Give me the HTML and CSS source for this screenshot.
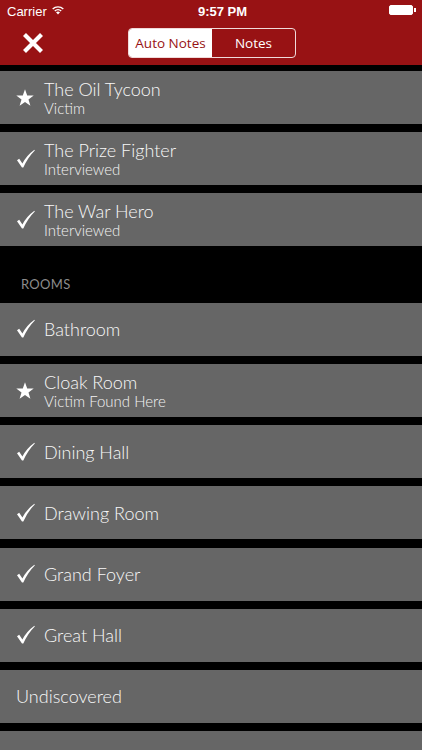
FILE: index.html
```html
<!DOCTYPE html>
<html>
<head>
<meta charset="utf-8">
<link rel="stylesheet" href="styles.css">
</head>
<body>
<div class="header">
  <div class="status">
    <div class="carrier">Carrier
      <svg class="wifi" width="14" height="10" viewBox="0 0 14 10"><path d="M7 9.5 L5 7.3 A3 3 0 0 1 9 7.3 Z" fill="#fff"/><path d="M3.3 5.6 A5.3 5.3 0 0 1 10.7 5.6 L9.7 6.6 A3.9 3.9 0 0 0 4.3 6.6 Z" fill="#fff"/><path d="M1.2 3.6 A8.2 8.2 0 0 1 12.8 3.6 L11.8 4.6 A6.8 6.8 0 0 0 2.2 4.6 Z" fill="#fff"/></svg>
    </div>
    <div class="time">9:57 PM</div>
    <div class="battery"><span class="batt-body"></span><span class="batt-tip"></span></div>
  </div>
  <div class="nav">
    <svg class="close" width="22" height="22" viewBox="0 0 22 22"><path d="M2.5 2.5 L19.5 19.5 M19.5 2.5 L2.5 19.5" stroke="#fff" stroke-width="4.2" stroke-linecap="butt"/></svg>
    <div class="seg">
      <div class="seg-item active">Auto Notes</div>
      <div class="seg-item">Notes</div>
    </div>
  </div>
</div>
<div class="list">
  <div class="row"><svg class="icon" viewBox="0 0 20 20"><path d="M10 1.2 L12.2 7.4 L18.7 7.5 L13.5 11.4 L15.4 17.7 L10 13.9 L4.6 17.7 L6.5 11.4 L1.3 7.5 L7.8 7.4 Z" fill="#fff"/></svg><div class="txt"><div class="title">The Oil Tycoon</div><div class="sub">Victim</div></div></div>
  <div class="row"><svg class="icon" viewBox="0 0 20 20"><path d="M2 11.2 L4.2 9.8 L7.4 14.6 Q11.5 6.5 19.4 0.8 L19.8 1.4 Q12.6 8.5 8.3 18.6 L7 18.6 Z" fill="#fff"/></svg><div class="txt"><div class="title">The Prize Fighter</div><div class="sub">Interviewed</div></div></div>
  <div class="row"><svg class="icon" viewBox="0 0 20 20"><path d="M2 11.2 L4.2 9.8 L7.4 14.6 Q11.5 6.5 19.4 0.8 L19.8 1.4 Q12.6 8.5 8.3 18.6 L7 18.6 Z" fill="#fff"/></svg><div class="txt"><div class="title">The War Hero</div><div class="sub">Interviewed</div></div></div>
  <div class="section">ROOMS</div>
  <div class="row"><svg class="icon" viewBox="0 0 20 20"><path d="M2 11.2 L4.2 9.8 L7.4 14.6 Q11.5 6.5 19.4 0.8 L19.8 1.4 Q12.6 8.5 8.3 18.6 L7 18.6 Z" fill="#fff"/></svg><div class="txt"><div class="title">Bathroom</div></div></div>
  <div class="row"><svg class="icon" viewBox="0 0 20 20"><path d="M10 1.2 L12.2 7.4 L18.7 7.5 L13.5 11.4 L15.4 17.7 L10 13.9 L4.6 17.7 L6.5 11.4 L1.3 7.5 L7.8 7.4 Z" fill="#fff"/></svg><div class="txt"><div class="title">Cloak Room</div><div class="sub">Victim Found Here</div></div></div>
  <div class="row"><svg class="icon" viewBox="0 0 20 20"><path d="M2 11.2 L4.2 9.8 L7.4 14.6 Q11.5 6.5 19.4 0.8 L19.8 1.4 Q12.6 8.5 8.3 18.6 L7 18.6 Z" fill="#fff"/></svg><div class="txt"><div class="title">Dining Hall</div></div></div>
  <div class="row"><svg class="icon" viewBox="0 0 20 20"><path d="M2 11.2 L4.2 9.8 L7.4 14.6 Q11.5 6.5 19.4 0.8 L19.8 1.4 Q12.6 8.5 8.3 18.6 L7 18.6 Z" fill="#fff"/></svg><div class="txt"><div class="title">Drawing Room</div></div></div>
  <div class="row"><svg class="icon" viewBox="0 0 20 20"><path d="M2 11.2 L4.2 9.8 L7.4 14.6 Q11.5 6.5 19.4 0.8 L19.8 1.4 Q12.6 8.5 8.3 18.6 L7 18.6 Z" fill="#fff"/></svg><div class="txt"><div class="title">Grand Foyer</div></div></div>
  <div class="row"><svg class="icon" viewBox="0 0 20 20"><path d="M2 11.2 L4.2 9.8 L7.4 14.6 Q11.5 6.5 19.4 0.8 L19.8 1.4 Q12.6 8.5 8.3 18.6 L7 18.6 Z" fill="#fff"/></svg><div class="txt"><div class="title">Great Hall</div></div></div>
  <div class="row plain"><div class="txt"><div class="title">Undiscovered</div></div></div>
  <div class="row"></div>
</div>
</body>
</html>
```
FILE: styles.css
```css
html, body {
  margin: 0;
  padding: 0;
  background: #000;
  width: 422px;
  height: 750px;
  overflow: hidden;
}
body {
  font-family: Lato, "Open Sans", sans-serif;
  color: #f4f4f4;
}
.header {
  background: #981214;
  height: 65px;
}
.status {
  height: 20px;
  display: flex;
  align-items: center;
  justify-content: space-between;
  padding: 0 6px 0 7px;
  font-family: "Liberation Sans", Arial, sans-serif;
  font-size: 13px;
  color: #fff;
}
.carrier {
  display: flex;
  align-items: center;
  gap: 4px;
  width: 80px;
  padding-top: 2px;
}
.wifi { margin-top: -2px; }
.time {
  font-weight: bold;
  font-size: 13px;
  padding-top: 2px;
  margin-left: 22px;
}
.battery {
  width: 80px;
  display: flex;
  justify-content: flex-end;
  align-items: center;
}
.batt-body {
  width: 22px;
  height: 8px;
  background: #fff;
  border: 1px solid #fff;
  border-radius: 2px;
}
.batt-tip {
  width: 2px;
  height: 4px;
  background: #fff;
  margin-left: 1px;
}
.nav {
  height: 45px;
  display: flex;
  align-items: center;
}
.close {
  margin-left: 22px;
}
.seg {
  margin-left: 84px;
  width: 168px;
  height: 30px;
  box-sizing: border-box;
  border: 1px solid #f0dada;
  border-radius: 4px;
  display: flex;
  overflow: hidden;
}
.seg-item {
  flex: 1;
  display: flex;
  align-items: center;
  justify-content: center;
  font-family: "Open Sans", Lato, sans-serif;
  font-size: 13.5px;
  color: #fff;
}
.seg-item.active {
  background: #fff;
  color: #981214;
}
.list {
  padding-top: 6px;
  height: 679px;
  overflow: hidden;
}
.row {
  height: 53px;
  background: #666666;
  margin-bottom: 8.16px;
  display: flex;
  align-items: center;
}
.icon {
  width: 20px;
  height: 20px;
  margin-left: 15px;
  margin-right: 9px;
  flex: none;
}
.row.plain .txt {
  margin-left: 16px;
}
.txt {
  display: flex;
  flex-direction: column;
}
.title {
  font-size: 18px;
  font-weight: 300;
  line-height: 20px;
  color: #f8f8f8;
}
.sub {
  font-size: 15px;
  font-weight: 300;
  line-height: 18px;
  color: #f4f4f4;
}
.section {
  height: 48.5px;
  margin-top: -8.16px;
  box-sizing: border-box;
  padding: 30px 0 0 21px;
  font-size: 13px;
  font-weight: 400;
  color: #8c8c8c;
  letter-spacing: 0.3px;
  margin-bottom: 8.16px;
}
```
